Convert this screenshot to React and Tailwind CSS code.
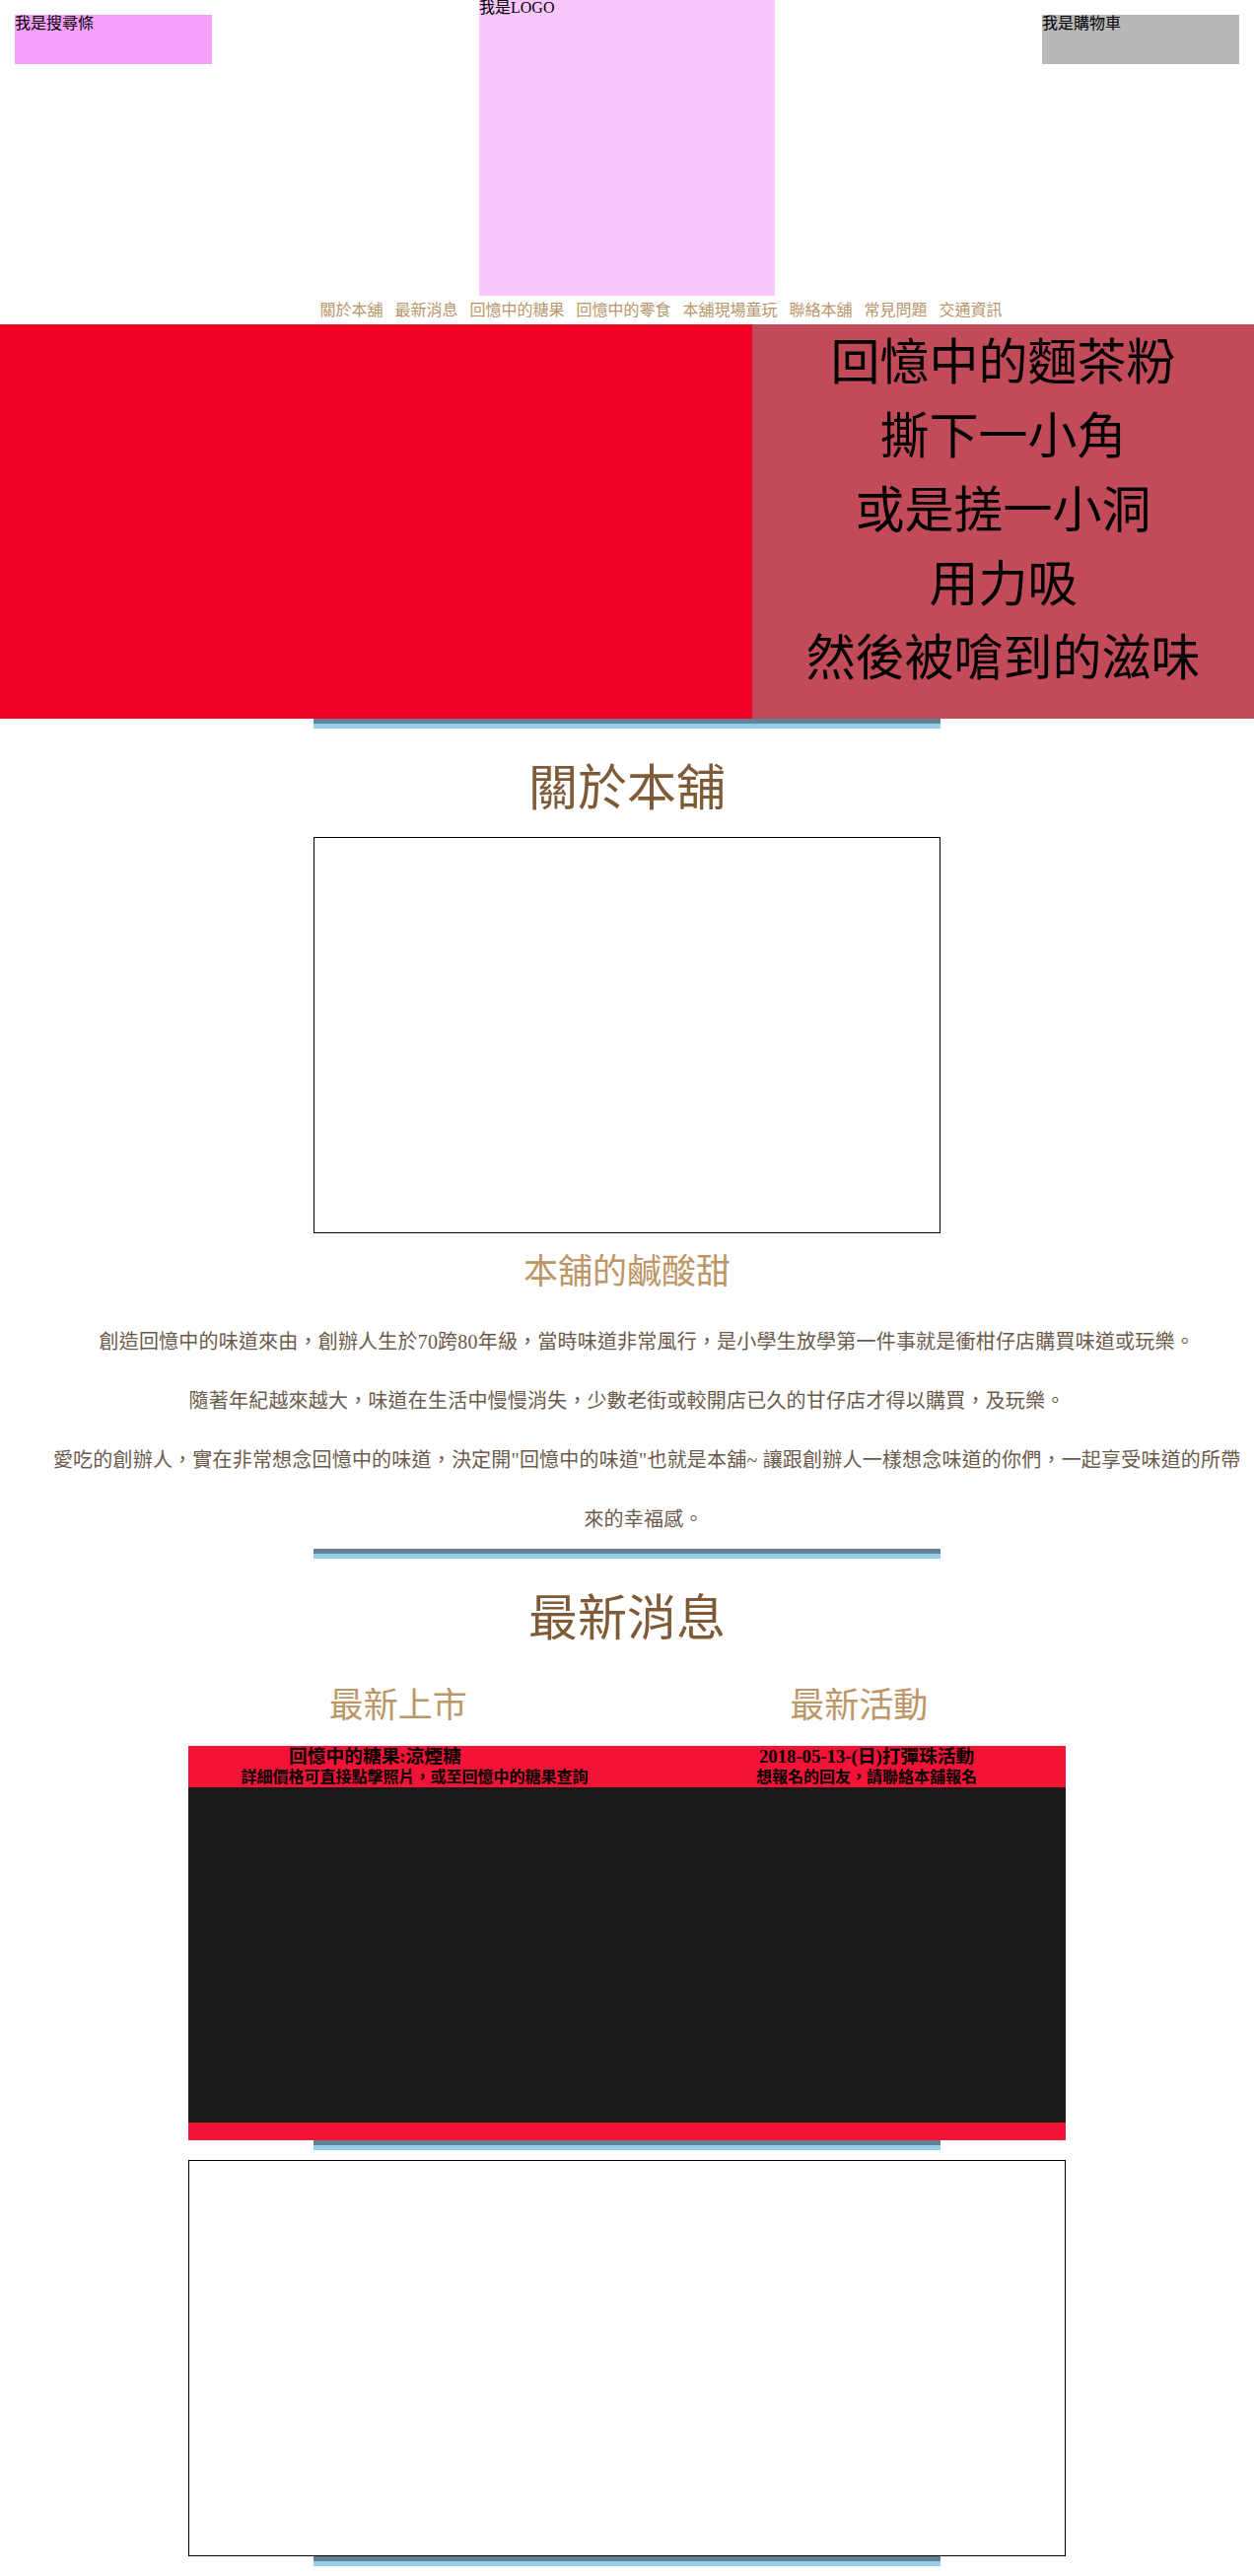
import React from 'react';

const navItems = ['關於本舖', '最新消息', '回憶中的糖果', '回憶中的零食', '本舖現場童玩', '聯絡本舖', '常見問題', '交通資訊'];

const heroLines = ['回憶中的麵茶粉', '撕下一小角', '或是搓一小洞', '用力吸', '然後被嗆到的滋味'];

function Divider() {
  return (
    <div className="mx-auto w-1/2">
      <div className="h-[5px] bg-[#5f8296]"></div>
      <div className="h-[5px] bg-[#93cde8]"></div>
    </div>
  );
}

function SectionTitle({ children }) {
  return (
    <h2 className="mt-[31px] mb-[19px] text-center text-[50px] leading-[60px] font-normal text-[#7f5a36]">
      {children}
    </h2>
  );
}

export default function App() {
  return (
    <div className="w-full bg-white pb-[10px] text-black font-['Liberation_Serif','Noto_Sans_CJK_TC',serif]">
      {/* header */}
      <header className="flex items-start justify-between px-[15px]">
        <div className="mt-[15px] h-[50px] w-[200px] bg-[#f9a0fd] text-[16px] leading-[18px]">我是搜尋條</div>
        <div className="h-[300px] w-[300px] bg-[#fac6fe] text-[16px] leading-[16px]">我是LOGO</div>
        <div className="mt-[15px] h-[50px] w-[200px] bg-[#b8b8b8] text-[16px] leading-[18px]">我是購物車</div>
      </header>

      <nav className="flex h-[29px] items-center justify-center gap-[12px] pl-[69px] text-[16px] leading-[29px] text-[#b8956a]">
        {navItems.map((item) => (
          <a key={item} href="#" className="whitespace-nowrap">{item}</a>
        ))}
      </nav>

      {/* hero */}
      <section className="flex h-[400px]">
        <div className="w-[60%] bg-[#f00024]"></div>
        <div className="flex-1 bg-[#c24b5a] pt-[2px] text-center text-[50px] leading-[75px]">
          {heroLines.map((line) => (
            <div key={line}>{line}</div>
          ))}
        </div>
      </section>

      <Divider />

      {/* about */}
      <SectionTitle>關於本舖</SectionTitle>
      <div className="mx-auto h-[402px] w-1/2 border border-black"></div>
      <h3 className="mt-[20px] mb-[-1px] text-center text-[35px] leading-[40px] font-normal text-[#bd9667]">本舖的鹹酸甜</h3>
      <div className="mt-[21px] text-center text-[20px] leading-[60px] tracking-[0.2px] text-[#6b5a4c]">
        <p className="whitespace-nowrap">　　創造回憶中的味道來由，創辦人生於70跨80年級，當時味道非常風行，是小學生放學第一件事就是衝柑仔店購買味道或玩樂。</p>
        <p className="whitespace-nowrap">隨著年紀越來越大，味道在生活中慢慢消失，少數老街或較開店已久的甘仔店才得以購買，及玩樂。</p>
        <p className="whitespace-nowrap">　　愛吃的創辦人，實在非常想念回憶中的味道，決定開"回憶中的味道"也就是本舖~ 讓跟創辦人一樣想念味道的你們，一起享受味道的所帶</p>
        <p className="pl-[34px]">來的幸福感。</p>
      </div>

      <Divider />

      {/* news */}
      <SectionTitle>最新消息</SectionTitle>
      <div className="mx-auto mt-[39px] mb-[20px] flex w-[70%] justify-between pl-[143px] pr-[140px] text-[35px] leading-[40px] text-[#bd9667]">
        <h3 className="font-normal">最新上市</h3>
        <h3 className="font-normal">最新活動</h3>
      </div>
      <div className="mx-auto h-[400px] w-[70%] bg-[#f21336]">
        <div className="grid grid-cols-2 font-bold">
          <div className="text-center">
            <h3 className="pr-[66px] text-[18.72px] leading-[22px]">回憶中的糖果:涼煙糖</h3>
            <p className="pl-[14px] text-[16px] leading-[20px]">詳細價格可直接點擊照片，或至回憶中的糖果查詢</p>
          </div>
          <div className="pl-[41px] text-center">
            <h3 className="text-[18.72px] leading-[22px]">2018-05-13-(日)打彈珠活動</h3>
            <p className="text-[16px] leading-[20px]">想報名的回友，請聯絡本舖報名</p>
          </div>
        </div>
        <div className="h-[340px] bg-[#191919]"></div>
      </div>

      <Divider />

      <div className="mx-auto mt-[10px] h-[402px] w-[70%] border border-black"></div>

      <Divider />
    </div>
  );
}
